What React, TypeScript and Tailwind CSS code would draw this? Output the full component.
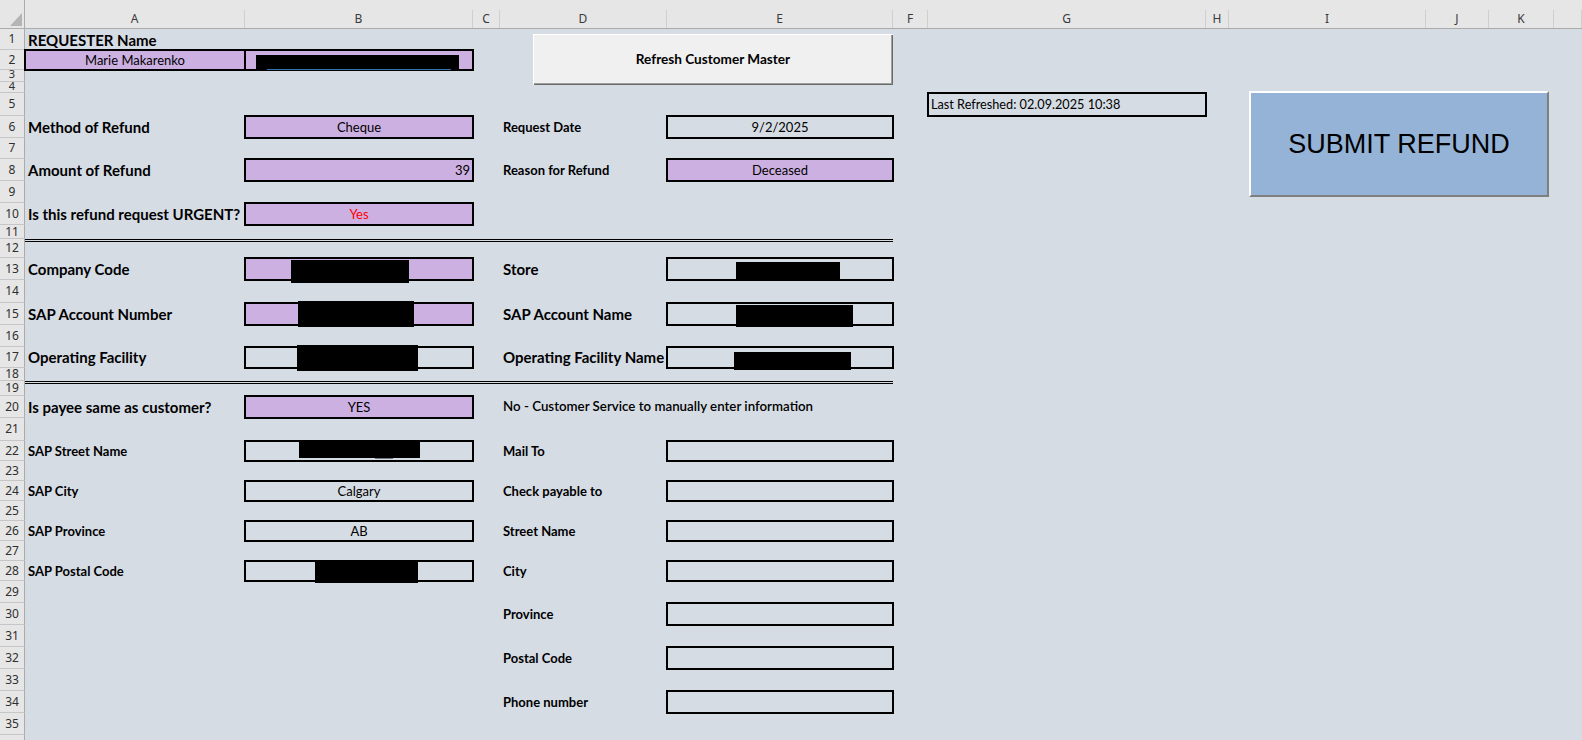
import React from "react";

const COLS = ["A", "B", "C", "D", "E", "F", "G", "H", "I", "J", "K", "L"];
const COL_START: Record<string, number> = {
  A: 25, B: 245, C: 473, D: 500, E: 667, F: 893, G: 928, H: 1206, I: 1229, J: 1426, K: 1489, L: 1554,
};
const ROW_START: Record<number, number> = {
  1: 29, 2: 50, 3: 70, 4: 82, 5: 93, 6: 116, 7: 138, 8: 159, 9: 181, 10: 203, 11: 225, 12: 239,
  13: 258, 14: 280, 15: 303, 16: 325, 17: 347, 18: 368, 19: 381, 20: 396, 21: 418, 22: 441,
  23: 461, 24: 481, 25: 501, 26: 521, 27: 541, 28: 561, 29: 581, 30: 603, 31: 625, 32: 647,
  33: 669, 34: 691, 35: 713, 36: 735,
};

type Rect = { x: number; y: number; w: number; h: number; color?: string };

function BigLabel({ t }: { t: string }) {
  return (
    <div className="flex items-center pl-[3px] whitespace-nowrap font-['Lato',sans-serif] font-bold text-[15px] leading-none text-black">
      {t}
    </div>
  );
}

function SmallLabel({ t }: { t: string }) {
  return (
    <div className="flex items-center pl-[3px] whitespace-nowrap font-['Lato',sans-serif] font-bold text-[13px] leading-none text-black">
      {t}
    </div>
  );
}

function Box({
  col,
  row,
  purple,
  children,
  align = "center",
  red,
  redact = [],
}: {
  col: string;
  row: number;
  purple?: boolean;
  children?: React.ReactNode;
  align?: "center" | "right" | "left";
  red?: boolean;
  redact?: Rect[];
}) {
  const ox = COL_START[col] + 1;
  const oy = ROW_START[row] + 1;
  const alignCls =
    align === "center" ? "justify-center" : align === "right" ? "justify-end pr-[2px]" : "justify-start pl-[2px]";
  return (
    <div
      className={
        "relative -m-px border-2 border-black flex items-center whitespace-nowrap font-['Lato',sans-serif] text-[13px] leading-none " +
        alignCls +
        (purple ? " bg-[#cdb0e2]" : "") +
        (red ? " text-[#ff0000]" : " text-black")
      }
    >
      {children}
      {redact.map((r, i) => (
        <div
          key={i}
          className="absolute z-10"
          style={{ left: r.x - ox, top: r.y - oy, width: r.w, height: r.h, background: r.color ?? "#000" }}
        />
      ))}
    </div>
  );
}

const CELLS: Record<number, Record<string, React.ReactNode>> = {
  1: {
    A: (
      <div className="flex items-end pb-[2px] pl-[3px] whitespace-nowrap font-['Lato',sans-serif] font-bold text-[15px] leading-none text-black">
        REQUESTER Name
      </div>
    ),
  },
  2: {
    A: (
      <Box col="A" row={2} purple>
        Marie Makarenko
      </Box>
    ),
    B: (
      <Box
        col="B"
        row={2}
        purple
        redact={[
          { x: 256, y: 55, w: 203, h: 14 },
          { x: 267, y: 69, w: 184, h: 1, color: "#2e75b6" },
        ]}
      />
    ),
  },
  5: {
    G: (
      <Box col="G" row={5} align="left">
        <span className="text-[12.7px]">Last Refreshed: 02.09.2025 10:38</span>
      </Box>
    ),
  },
  6: {
    A: <BigLabel t="Method of Refund" />,
    B: (
      <Box col="B" row={6} purple>
        Cheque
      </Box>
    ),
    D: <SmallLabel t="Request Date" />,
    E: (
      <Box col="E" row={6}>
        9/2/2025
      </Box>
    ),
  },
  8: {
    A: <BigLabel t="Amount of Refund" />,
    B: (
      <Box col="B" row={8} purple align="right">
        39
      </Box>
    ),
    D: <SmallLabel t="Reason for Refund" />,
    E: (
      <Box col="E" row={8} purple>
        Deceased
      </Box>
    ),
  },
  10: {
    A: <BigLabel t="Is this refund request URGENT?" />,
    B: (
      <Box col="B" row={10} purple red>
        Yes
      </Box>
    ),
  },
  13: {
    A: <BigLabel t="Company Code" />,
    B: <Box col="B" row={13} purple redact={[{ x: 291, y: 260, w: 118, h: 23 }]} />,
    D: <BigLabel t="Store" />,
    E: <Box col="E" row={13} redact={[{ x: 736, y: 262, w: 104, h: 17 }]} />,
  },
  15: {
    A: <BigLabel t="SAP Account Number" />,
    B: <Box col="B" row={15} purple redact={[{ x: 298, y: 301, w: 116, h: 26 }]} />,
    D: <BigLabel t="SAP Account Name" />,
    E: <Box col="E" row={15} redact={[{ x: 736, y: 305, w: 117, h: 22 }]} />,
  },
  17: {
    A: <BigLabel t="Operating Facility" />,
    B: <Box col="B" row={17} redact={[{ x: 297, y: 345, w: 121, h: 26 }]} />,
    D: <BigLabel t="Operating Facility Name" />,
    E: <Box col="E" row={17} redact={[{ x: 734, y: 352, w: 117, h: 18 }]} />,
  },
  20: {
    A: <BigLabel t="Is payee same as customer?" />,
    B: (
      <Box col="B" row={20} purple>
        YES
      </Box>
    ),
    D: (
      <div className="flex items-center pl-[3px] whitespace-nowrap font-['Lato',sans-serif] font-semibold text-[13.3px] leading-none text-black">
        No - Customer Service to manually enter information
      </div>
    ),
  },
  22: {
    A: <SmallLabel t="SAP Street Name" />,
    B: (
      <Box
        col="B"
        row={22}
        redact={[
          { x: 299, y: 442, w: 121, h: 16 },
          { x: 375, y: 458, w: 18, h: 1, color: "#777" },
        ]}
      />
    ),
    D: <SmallLabel t="Mail To" />,
    E: <Box col="E" row={22} />,
  },
  24: {
    A: <SmallLabel t="SAP City" />,
    B: <Box col="B" row={24}>Calgary</Box>,
    D: <SmallLabel t="Check payable to" />,
    E: <Box col="E" row={24} />,
  },
  26: {
    A: <SmallLabel t="SAP Province" />,
    B: <Box col="B" row={26}>AB</Box>,
    D: <SmallLabel t="Street Name" />,
    E: <Box col="E" row={26} />,
  },
  28: {
    A: <SmallLabel t="SAP Postal Code" />,
    B: <Box col="B" row={28} redact={[{ x: 315, y: 562, w: 103, h: 21 }]} />,
    D: <SmallLabel t="City" />,
    E: <Box col="E" row={28} />,
  },
  30: { D: <SmallLabel t="Province" />, E: <Box col="E" row={30} /> },
  32: { D: <SmallLabel t="Postal Code" />, E: <Box col="E" row={32} /> },
  34: { D: <SmallLabel t="Phone number" />, E: <Box col="E" row={34} /> },
};

function Corner() {
  return (
    <div className="relative bg-[#e6e6e6] border-r border-b border-[#ababab]">
      <svg className="absolute left-[10px] top-[13px]" width="13" height="14" viewBox="0 0 13 14">
        <polygon points="12,0 12,13 0,13" fill="#b4b4b4" />
      </svg>
    </div>
  );
}

function ColHead({ l }: { l: string }) {
  return (
    <div className="flex flex-col bg-[#e6e6e6] border-b border-[#ababab]">
      <div className="h-[10px]" />
      <div className="flex-1 flex items-center justify-center border-r border-[#cfcfcf] font-['Noto_Sans',sans-serif] text-[12px] leading-none text-[#3a3a3a]">
        {l === "L" ? "" : l}
      </div>
    </div>
  );
}

function RowHead({ r }: { r: number }) {
  const small = r === 3 || r === 4;
  return (
    <div
      className={
        "flex justify-center overflow-hidden bg-[#e6e6e6] border-r border-r-[#ababab] border-b border-b-[#c6c6c6] font-['Noto_Sans',sans-serif] leading-none text-[#2f2f2f] " +
        (small ? "items-start text-[11px]" : "items-center text-[12px]")
      }
    >
      <span className={small ? "-mt-[2px]" : ""}>{r}</span>
    </div>
  );
}

export default function App() {
  const kids: React.ReactNode[] = [];
  kids.push(<Corner key="corner" />);
  COLS.forEach((l) => kids.push(<ColHead key={"h" + l} l={l} />));
  for (let r = 1; r <= 36; r++) {
    kids.push(<RowHead key={"r" + r} r={r} />);
    if (r === 12 || r === 19) {
      kids.push(<div key={"dbl" + r} className="col-span-5 border-t-[3px] border-double border-black" />);
      ["F", "G", "H", "I", "J", "K", "L"].forEach((c) => kids.push(<div key={r + c} />));
      continue;
    }
    COLS.forEach((c) => {
      const node = CELLS[r]?.[c];
      kids.push(<React.Fragment key={r + c}>{node ?? <div />}</React.Fragment>);
    });
  }

  return (
    <div className="relative w-[1582px] h-[740px] overflow-hidden bg-[#d6dce4]">
      <div className="grid grid-cols-[25px_220px_228px_27px_167px_226px_35px_278px_23px_197px_63px_65px_1fr] grid-rows-[29px_21px_20px_12px_11px_23px_22px_21px_22px_22px_22px_14px_19px_22px_23px_22px_22px_21px_13px_15px_22px_23px_20px_20px_20px_20px_20px_20px_20px_22px_22px_22px_22px_22px_22px_22px_22px]">
        {kids}
      </div>

      <button className="absolute left-[533px] top-[34px] w-[360px] h-[51px] bg-[#f0f0f0] shadow-[inset_1px_1px_0_#ffffff,inset_-1px_-1px_0_#696969,inset_-2px_-2px_0_#a0a0a0] flex items-center justify-center font-['Lato',sans-serif] font-bold text-[13.6px] text-black">
        Refresh Customer Master
      </button>

      <button className="absolute left-[1249px] top-[91px] w-[300px] h-[106px] bg-[#95b3d7] border-t-2 border-l-2 border-t-white border-l-white border-b-2 border-r-2 border-b-[#7f7f7f] border-r-[#7f7f7f] flex items-center justify-center font-['Liberation_Sans',Arial,sans-serif] text-[27px] text-black">
        SUBMIT REFUND
      </button>
    </div>
  );
}
